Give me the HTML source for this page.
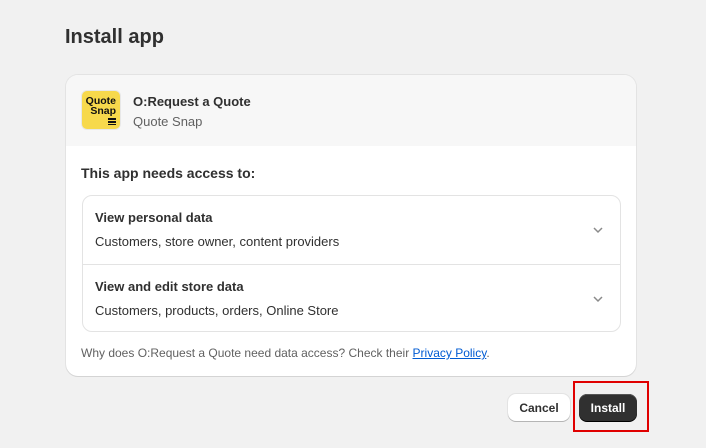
<!DOCTYPE html>
<html><head><style>
*{box-sizing:border-box;margin:0;padding:0}
body{width:706px;height:448px;background:#f1f1f1;font-family:"Liberation Sans",sans-serif;color:#303030;position:relative;overflow:hidden}
h1{position:absolute;left:65px;top:26px;font-size:20px;font-weight:bold;color:#303030}
.card{position:absolute;left:66px;top:75px;width:570px;height:301px;background:#fff;border-radius:12px;box-shadow:0 1px 0 #d4d4d4,0 0 0 1px #e3e3e3;overflow:hidden}
.hdr{height:71px;background:#f7f7f7;position:relative}
.logo{position:absolute;left:15px;top:15px;width:40px;height:40px;background:#f7d94c;border-radius:6px;border:1px solid #e8e8e8}
.logo span{position:absolute;right:4px;font-size:10.5px;font-weight:bold;color:#111;line-height:10px;text-align:right}
.t1{position:absolute;left:67px;top:19px;font-size:13px;font-weight:bold}
.t2{position:absolute;left:67px;top:39px;font-size:13px;color:#616161}
.need{position:absolute;left:15px;top:90px;font-size:14px;font-weight:bold}
.box{position:absolute;left:16px;top:120px;width:539px;height:137px;border:1px solid #e3e3e3;border-radius:10px}
.row{position:absolute;left:12px;font-size:13px}
.b{font-weight:bold}
.div{position:absolute;left:0;right:0;top:68px;border-top:1px solid #e3e3e3}
.chev{position:absolute;right:16px}
.foot{position:absolute;left:15px;top:271px;font-size:12px;color:#616161}
.foot a{color:#005bd3;text-decoration:underline}
.btn{position:absolute;top:394px;height:27px;border-radius:8px;font-size:12px;font-weight:bold;display:flex;align-items:center;justify-content:center}
</style></head><body>
<h1>Install app</h1>
<div class="card">
 <div class="hdr">
  <div class="logo"><span style="top:5px">Quote</span><span style="top:15px">Snap</span><span style="top:27px;width:8px;height:7px;background:repeating-linear-gradient(#111 0 2px,transparent 2px 3px)"></span></div>
  <div class="t1">O:Request a Quote</div>
  <div class="t2">Quote Snap</div>
 </div>
 <div class="need">This app needs access to:</div>
 <div class="box">
  <div class="row b" style="top:14px">View personal data</div>
  <div class="row" style="top:38px">Customers, store owner, content providers</div>
  <svg class="chev" style="top:30px" width="12" height="8" viewBox="0 0 12 8"><path d="M2 2l4 4 4-4" fill="none" stroke="#8a8a8a" stroke-width="1.5"/></svg>
  <div class="div"></div>
  <div class="row b" style="top:83px">View and edit store data</div>
  <div class="row" style="top:107px">Customers, products, orders, Online Store</div>
  <svg class="chev" style="top:99px" width="12" height="8" viewBox="0 0 12 8"><path d="M2 2l4 4 4-4" fill="none" stroke="#8a8a8a" stroke-width="1.5"/></svg>
 </div>
 <div class="foot">Why does O:Request a Quote need data access? Check their <a>Privacy Policy</a>.</div>
</div>
<div class="btn" style="left:508px;width:62px;background:#fff;box-shadow:0 1px 0 #b5b5b5,0 0 0 1px #e3e3e3;color:#303030">Cancel</div>
<div class="btn" style="left:579px;width:58px;background:#303030;color:#fff;box-shadow:0 1px 0 #000,inset 0 1px 0 #555">Install</div>
<div style="position:absolute;left:573px;top:381px;width:76px;height:51px;border:2px solid #e00000"></div>
</body></html>
